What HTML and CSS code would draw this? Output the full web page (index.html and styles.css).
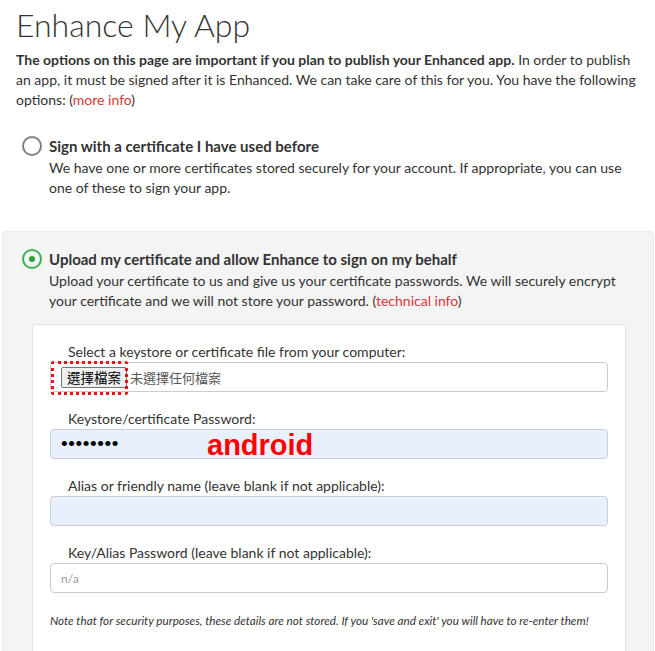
FILE: index.html
```html
<!DOCTYPE html>
<html>
<head>
<meta charset="utf-8">
<link rel="stylesheet" href="styles.css">
</head>
<body>
<div class="page">
  <h1 class="title">Enhance My App</h1>
  <p class="intro"><strong>The options on this page are important if you plan to publish your Enhanced app.</strong> In order to publish an app, it must be signed after it is Enhanced. We can take care of this for you. You have the following options: (<a class="link">more info</a>)</p>

  <div class="option">
    <span class="radio"></span>
    <div class="option-body">
      <div class="option-title">Sign with a certificate I have used before</div>
      <div class="option-desc">We have one or more certificates stored securely for your account. If appropriate, you can use one of these to sign your app.</div>
    </div>
  </div>

  <div class="option option-selected">
    <span class="radio radio-on"></span>
    <div class="option-body">
      <div class="option-title">Upload my certificate and allow Enhance to sign on my behalf</div>
      <div class="option-desc">Upload your certificate to us and give us your certificate passwords. We will securely encrypt your certificate and we will not store your password. (<a class="link">technical info</a>)</div>
    </div>
    <div class="form-box">
      <label class="field-label">Select a keystore or certificate file from your computer:</label>
      <div class="input file-input">
        <span class="file-btn">選擇檔案</span><span class="file-none">未選擇任何檔案</span>
        <span class="dotted-mark"></span>
      </div>
      <label class="field-label">Keystore/certificate Password:</label>
      <div class="input input-auto">
        <span class="dots">••••••••</span>
        <span class="annot">android</span>
      </div>
      <label class="field-label">Alias or friendly name (leave blank if not applicable):</label>
      <div class="input input-auto"></div>
      <label class="field-label">Key/Alias Password (leave blank if not applicable):</label>
      <div class="input"><span class="placeholder">n/a</span></div>
      <p class="note">Note that for security purposes, these details are not stored. If you 'save and exit' you will have to re-enter them!</p>
    </div>
  </div>
</div>
</body>
</html>
```

FILE: styles.css
```css
html, body {
  margin: 0;
  padding: 0;
  background: #fff;
  overflow: hidden;
}
body {
  font-family: Lato, "Noto Sans", sans-serif;
  color: #333;
  font-size: 14px;
}
.page {
  padding: 0 0 0 2px;
  width: 652px;
}
.title {
  margin: 0;
  padding: 4px 14px 0;
  font-weight: 300;
  font-size: 32px;
  line-height: 42px;
  color: #333;
}
.intro {
  margin: 4px 0 0;
  padding: 0 12px 0 14px;
  line-height: 20px;
}
.intro strong {
  font-weight: 700;
}
.link {
  color: #d2393a;
  text-decoration: none;
}
.option {
  display: flex;
  flex-wrap: wrap;
  padding: 17px 14px 18px 20px;
  margin-top: 8px;
}
.option-selected {
  margin-top: 15px;
  background: #f4f4f4;
  border: 1px solid #ececec;
  border-radius: 4px;
  padding: 16px 0 30px 19px;
}
.radio {
  flex: none;
  width: 16px;
  height: 16px;
  border: 2px solid #808080;
  border-radius: 50%;
  margin-top: 1px;
  margin-right: 7px;
  display: flex;
  align-items: center;
  justify-content: center;
}
.radio-on {
  border-color: #3cb44b;
}
.radio-on::after {
  content: "";
  width: 6px;
  height: 6px;
  border-radius: 50%;
  background: #2c9f3c;
}
.option-body {
  flex: 1;
  min-width: 0;
}
.option-selected .option-body {
  padding-right: 14px;
}
.option-title {
  font-size: 15px;
  font-weight: 700;
  line-height: 22px;
  color: #333;
}
.option-desc {
  margin-top: 1px;
  line-height: 20px;
}
.form-box {
  flex: 0 0 100%;
  box-sizing: border-box;
  margin: 13px 0 0 10px;
  width: 594px;
  max-width: 594px;
  background: #fff;
  border: 1px solid #e2e2e2;
  border-radius: 4px;
  padding: 17px 17px 40px 17px;
}
.field-label {
  display: block;
  padding-left: 18px;
  line-height: 20px;
  margin-top: 17px;
  color: #333;
}
.field-label:first-child {
  margin-top: 0;
}
.input {
  position: relative;
  box-sizing: border-box;
  height: 30px;
  border: 1px solid #ccc;
  border-radius: 4px;
  background: #fff;
  display: flex;
  align-items: center;
  padding: 0 10px;
}
.input-auto {
  background: #e8f0fe;
}
.file-btn {
  font-family: "Noto Sans CJK TC", sans-serif;
  font-size: 13.5px;
  line-height: 20px;
  height: 21px;
  box-sizing: border-box;
  padding: 0 5px;
  border: 1px solid #767676;
  border-radius: 2px;
  background: #efefef;
  color: #000;
  display: flex;
  align-items: center;
}
.file-none {
  font-family: "Noto Sans CJK TC", sans-serif;
  font-size: 13px;
  color: #555;
  margin-left: 3px;
}
.dotted-mark {
  position: absolute;
  left: 0;
  top: -2px;
  width: 77px;
  height: 34px;
  box-sizing: border-box;
  border: 3px dotted #e8131b;
  border-radius: 3px;
}
.dots {
  font-family: "Liberation Sans", Arial, sans-serif;
  font-size: 19px;
  line-height: 20px;
  letter-spacing: 0.6px;
  color: #000;
}
.annot {
  position: absolute;
  left: 156px;
  top: 0;
  font-family: "Liberation Sans", Arial, sans-serif;
  font-weight: 700;
  font-size: 29px;
  line-height: 30px;
  color: #f00;
}
.placeholder {
  font-size: 12px;
  color: #999;
}
.note {
  margin: 17px 0 0;
  font-size: 11.7px;
  font-style: italic;
  line-height: 20px;
  color: #333;
}
```
